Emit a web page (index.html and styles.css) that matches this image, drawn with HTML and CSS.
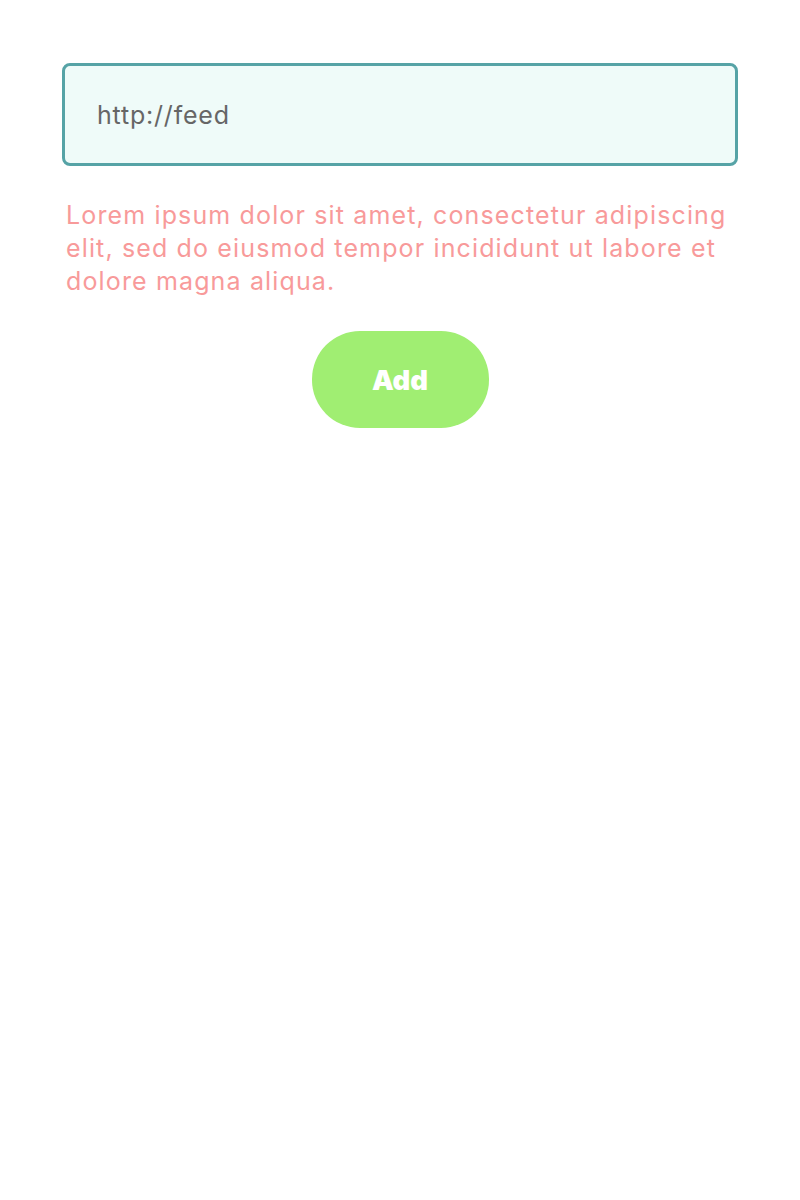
FILE: index.html
```html
<!DOCTYPE html>
<html>
<head>
<meta charset="utf-8">
<link rel="stylesheet" href="styles.css">
</head>
<body>
<div class="page">
  <div class="field">http://feed</div>
  <p class="error">Lorem ipsum dolor sit amet, consectetur adipiscing elit, sed do eiusmod tempor incididunt ut labore et dolore magna aliqua.</p>
  <div class="actions"><button class="add">Add</button></div>
</div>
</body>
</html>
```
FILE: styles.css
```css
html, body { margin: 0; padding: 0; background: #fff; }
body { font-family: Inter, "Noto Sans", sans-serif; }
.page { padding: 63px 62px 0 62px; }
.field {
  box-sizing: border-box;
  height: 103px;
  border: 3px solid #56a3a6;
  border-radius: 8px;
  background: #effbf9;
  display: flex;
  align-items: center;
  padding: 0 32px;
  font-size: 25px;
  letter-spacing: 0.8px;
  color: #666;
}
.error {
  margin: 33px 0 0 4px;
  font-size: 25px;
  letter-spacing: 1.14px;
  line-height: 33px;
  color: #f89a9a;
}
.actions { display: flex; justify-content: center; margin-top: 33px; }
.add {
  width: 177px;
  height: 97px;
  border: none;
  border-radius: 48px;
  background: #a0ee72;
  color: #fff;
  font-family: Inter, sans-serif;
  font-weight: 900;
  font-size: 27.5px;
  padding: 0;
}
```
